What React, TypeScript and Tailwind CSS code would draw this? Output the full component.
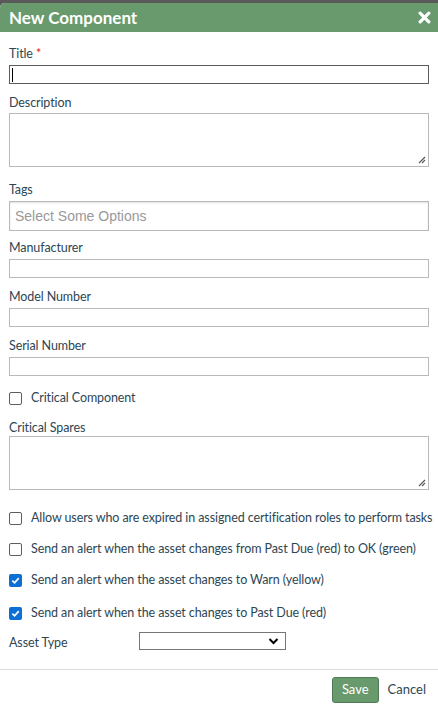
import React from "react"

const font = { fontFamily: "Lato, 'Noto Sans', sans-serif" }

function Label({ children, required }: { children: React.ReactNode; required?: boolean }) {
  return (
    <div className="text-[12.5px] leading-[16px] tracking-[-0.1px] text-[#2d4654]">
      {children}
      {required && <span className="text-[#e0201b] ml-[3px]">*</span>}
    </div>
  )
}

function TextInput({ focused }: { focused?: boolean }) {
  return (
    <div
      className={`mt-[3px] h-[19px] w-full border bg-white ${
        focused ? "border-[#5b5b5b]" : "border-[#b9b9b9]"
      } flex items-center pl-[2px]`}
    >
      {focused && <div className="h-[14px] w-px bg-black" />}
    </div>
  )
}

function TextArea({ top = "mt-[2px]" }: { top?: string }) {
  return (
    <div className={`relative ${top} h-[54px] w-full border border-[#b9b9b9] bg-white`}>
      <svg className="absolute right-[2px] bottom-[2px]" width="9" height="9" viewBox="0 0 9 9">
        <path d="M8 2 L2 8 M8 5 L5 8" stroke="#555" strokeWidth="1.1" />
      </svg>
    </div>
  )
}

function Check({ checked, label }: { checked?: boolean; label: string }) {
  return (
    <div className="flex h-[16px] items-center whitespace-nowrap text-[12.5px] leading-[16px] tracking-[-0.1px] text-[#2d4654]">
      {checked ? (
        <div className="mr-[9px] flex h-[13px] w-[13px] shrink-0 items-center justify-center rounded-[2px] bg-[#0b6fd6]">
          <svg width="9" height="9" viewBox="0 0 10 10">
            <path d="M1.5 5.2 L4 7.6 L8.6 2.4" stroke="#fff" strokeWidth="1.9" fill="none" />
          </svg>
        </div>
      ) : (
        <div className="mr-[9px] h-[13px] w-[13px] shrink-0 rounded-[2px] border border-[#5e5e5e] bg-white" />
      )}
      <span>{label}</span>
    </div>
  )
}

export default function App() {
  return (
    <div className="h-[708px] w-[438px] overflow-hidden bg-[#5a5a5a]" style={font}>
      <div className="mt-[3px] flex h-[705px] flex-col rounded-tl-[5px] bg-white">
        {/* header */}
        <div className="flex h-[29px] items-center justify-between rounded-tl-[5px] bg-[#699a6e] pl-[9px] pr-[7px]">
          <span className="text-[17px] font-bold text-white">New Component</span>
          <svg width="13" height="13" viewBox="0 0 12 12">
            <path d="M2 2 L10 10 M10 2 L2 10" stroke="#fff" strokeWidth="3" strokeLinecap="round" />
          </svg>
        </div>

        <div className="flex flex-col px-[9px] pt-[14px]">
          <Label required>Title</Label>
          <TextInput focused />

          <div className="mt-[11px]">
            <Label>Description</Label>
          </div>
          <TextArea />

          <div className="mt-[15px]">
            <Label>Tags</Label>
          </div>
          <div
            className="mt-[3px] flex h-[30px] w-full items-center border border-[#b9b9b9] bg-white pl-[5px] text-[14px] text-[#999] shadow-[inset_0_1px_2px_rgba(0,0,0,0.12)]"
            style={{ fontFamily: "'Liberation Sans', Arial, sans-serif" }}
          >
            Select Some Options
          </div>

          <div className="mt-[9px]">
            <Label>Manufacturer</Label>
          </div>
          <TextInput />

          <div className="mt-[11px]">
            <Label>Model Number</Label>
          </div>
          <TextInput />

          <div className="mt-[11px]">
            <Label>Serial Number</Label>
          </div>
          <TextInput />

          <div className="mt-[14px]">
            <Check label="Critical Component" />
          </div>

          <div className="mt-[14px]">
            <Label>Critical Spares</Label>
          </div>
          <TextArea top="mt-0" />

          <div className="mt-[20px] flex flex-col gap-[15px]">
            <Check label="Allow users who are expired in assigned certification roles to perform tasks" />
            <Check label="Send an alert when the asset changes from Past Due (red) to OK (green)" />
            <Check checked label="Send an alert when the asset changes to Warn (yellow)" />
            <div className="mt-[2px]">
              <Check checked label="Send an alert when the asset changes to Past Due (red)" />
            </div>
          </div>

          <div className="mt-[10px] flex items-center">
            <div className="w-[130px] pt-[4px] text-[12.5px] leading-[16px] tracking-[-0.1px] text-[#2d4654]">
              Asset Type
            </div>
            <div className="flex h-[18px] w-[147px] items-center justify-end border border-[#767676] bg-white pr-[6px]">
              <svg width="11" height="8" viewBox="0 0 11 8">
                <path d="M1.5 2 L5.5 6 L9.5 2" stroke="#000" strokeWidth="2" fill="none" />
              </svg>
            </div>
          </div>
        </div>

        <div className="mt-[18px] border-t border-[#dcdcdc]" />
        <div className="flex items-center justify-end pr-[12px] pt-[7px]">
          <button className="h-[26px] rounded-[3px] border border-[#4f7a53] bg-[#699a6e] px-[9px] text-[13px] text-white">
            Save
          </button>
          <span className="ml-[9px] text-[13px] text-[#2d4654]">Cancel</span>
        </div>
      </div>
    </div>
  )
}
